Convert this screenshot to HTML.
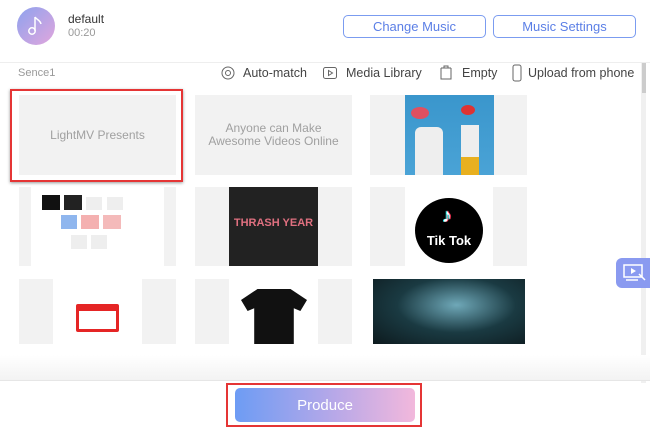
<!DOCTYPE html>
<html><head><style>
*{margin:0;padding:0;box-sizing:border-box}
body{width:650px;height:430px;overflow:hidden;background:#fff;font-family:"Liberation Sans",sans-serif;position:relative}
.a{position:absolute}
.btn{position:absolute;top:15px;height:23px;border:1px solid #7b9cf0;border-radius:5px;color:#5b7fe6;font-size:13px;text-align:center;line-height:21px}
.cell{position:absolute;background:#f2f2f2;overflow:hidden}
.t{font-size:12.5px;color:#444;position:absolute;top:66px}
.g{color:#a0a0a0;font-size:12px;text-align:center;position:absolute;width:100%}
</style></head><body>
<div class="a" style="left:17px;top:7px;width:38px;height:38px;border-radius:50%;background:linear-gradient(135deg,#8ea2ee,#e1a6dd)"></div>
<svg class="a" style="left:26px;top:14px" width="20" height="24" viewBox="0 0 20 24"><path d="M9 3v14" stroke="#fff" stroke-width="1.5" fill="none"/><path d="M9 3c2 3 5 3 6 7" stroke="#fff" stroke-width="1.5" fill="none"/><circle cx="6" cy="17" r="3.2" stroke="#fff" stroke-width="1.5" fill="none"/></svg>
<div class="a" style="left:68px;top:12px;font-size:12px;color:#333">default</div>
<div class="a" style="left:68px;top:27px;font-size:11px;color:#999">00:20</div>
<div class="btn" style="left:343px;width:143px">Change Music</div>
<div class="btn" style="left:493px;width:143px">Music Settings</div>
<div class="a" style="left:0;top:62px;width:650px;height:1px;background:#eee"></div>
<div class="a" style="left:641px;top:63px;width:5px;height:320px;background:#f0f0f0"></div>
<div class="a" style="left:642px;top:63px;width:4px;height:30px;background:#ccc"></div>
<div class="a" style="left:18px;top:67px;font-size:11px;color:#999">Sence1</div>
<svg class="a" style="left:220px;top:65px" width="16" height="16"><circle cx="8" cy="8" r="6" stroke="#666" fill="none"/><circle cx="8" cy="8" r="2.5" stroke="#666" fill="none"/></svg>
<div class="t" style="left:243px">Auto-match</div>
<svg class="a" style="left:322px;top:65px" width="16" height="16"><rect x="1.5" y="2.5" width="13" height="11" rx="2" stroke="#666" fill="none"/><path d="M6.5 5.5v5l4-2.5z" stroke="#666" fill="none"/></svg>
<div class="t" style="left:346px">Media Library</div>
<svg class="a" style="left:438px;top:64px" width="16" height="17"><path d="M3 4h10M3 4v11h10V4M6 4V2h4v2" stroke="#666" fill="none"/></svg>
<div class="t" style="left:462px">Empty</div>
<svg class="a" style="left:512px;top:64px" width="10" height="18"><rect x="1" y="1" width="8" height="16" rx="2" stroke="#666" fill="none"/></svg>
<div class="t" style="left:528px">Upload from phone</div>

<div class="cell" style="left:19px;top:95px;width:157px;height:80px"><div class="g" style="top:33px">LightMV Presents</div></div>
<div class="a" style="left:10px;top:89px;width:173px;height:93px;border:2px solid #e53535;box-shadow:0 1px 3px #999"></div>
<div class="cell" style="left:195px;top:95px;width:157px;height:80px"><div class="g" style="top:27px;line-height:13px">Anyone can Make<br>Awesome Videos Online</div></div>
<div class="cell" style="left:370px;top:95px;width:157px;height:80px"><div class="a" style="left:35px;top:0;width:89px;height:80px;background:linear-gradient(#3a96cc,#4aa3d6)"><div class="a" style="left:6px;top:12px;width:18px;height:12px;background:#e05060;border-radius:50%"></div><div class="a" style="left:10px;top:32px;width:28px;height:48px;background:#eee;border-radius:6px 6px 0 0"></div><div class="a" style="left:56px;top:30px;width:18px;height:32px;background:#eee"></div><div class="a" style="left:56px;top:10px;width:14px;height:10px;background:#d33;border-radius:50%"></div><div class="a" style="left:56px;top:62px;width:18px;height:18px;background:#e8b020"></div></div></div>

<div class="cell" style="left:19px;top:187px;width:157px;height:79px"><div class="a" style="left:12px;top:0;width:133px;height:79px;background:#fff"><div class="a" style="left:11px;top:8px;width:18px;height:15px;background:#111"></div><div class="a" style="left:33px;top:8px;width:18px;height:15px;background:#222"></div><div class="a" style="left:55px;top:10px;width:16px;height:13px;background:#eee"></div><div class="a" style="left:76px;top:10px;width:16px;height:13px;background:#eee"></div><div class="a" style="left:30px;top:28px;width:16px;height:14px;background:#8fb6ee"></div><div class="a" style="left:50px;top:28px;width:18px;height:14px;background:#f4b0b0"></div><div class="a" style="left:72px;top:28px;width:18px;height:14px;background:#f4baba"></div><div class="a" style="left:40px;top:48px;width:16px;height:14px;background:#eee"></div><div class="a" style="left:60px;top:48px;width:16px;height:14px;background:#eee"></div></div></div>
<div class="cell" style="left:195px;top:187px;width:157px;height:79px"><div class="a" style="left:34px;top:0;width:89px;height:79px;background:#222"><div class="a" style="left:0;top:30px;width:89px;text-align:center;color:#e07080;font-size:11px;font-weight:bold">THRASH YEAR</div></div></div>
<div class="cell" style="left:370px;top:187px;width:157px;height:79px"><div class="a" style="left:35px;top:0;width:88px;height:79px;background:#fff"><div class="a" style="left:10px;top:11px;width:68px;height:65px;border-radius:50%;background:#000"></div><div class="a" style="left:0;top:46px;width:88px;text-align:center;color:#fff;font-weight:bold;font-size:13px">Tik Tok</div><div class="a" style="left:37px;top:18px;color:#fff;font-size:20px;font-weight:bold;text-shadow:-1px 0 #2ee,1px 0 #f35">♪</div></div></div>

<div class="cell" style="left:19px;top:279px;width:157px;height:65px"><div class="a" style="left:34px;top:0;width:89px;height:65px;background:#fff"><div class="a" style="left:23px;top:25px;width:43px;height:28px;background:#e52525;border-radius:2px"><div class="a" style="left:3px;top:7px;width:37px;height:18px;background:#fff"></div></div></div></div>
<div class="cell" style="left:195px;top:279px;width:157px;height:65px"><div class="a" style="left:34px;top:0;width:89px;height:65px;background:#fff"><div class="a" style="left:12px;top:10px;width:66px;height:55px;background:#111;clip-path:polygon(0 20%,25% 0,75% 0,100% 20%,90% 40%,80% 35%,80% 100%,20% 100%,20% 35%,10% 40%)"></div></div></div>
<div class="a" style="left:373px;top:279px;width:152px;height:65px;background:radial-gradient(ellipse at 55% 40%,#6fa8b8,#1a3a42 50%,#0d1a1e)"></div>

<div class="a" style="left:616px;top:258px;width:34px;height:30px;border-radius:6px 0 0 6px;background:#8a9af0"></div>
<svg class="a" style="left:623px;top:264px" width="24" height="18"><rect x="1" y="1" width="18" height="12" stroke="#fff" stroke-width="1.5" fill="none"/><path d="M8 4v6l5-3z" fill="#fff"/><path d="M3 16h12M16 10l6 6" stroke="#fff" stroke-width="1.5"/></svg>

<div class="a" style="left:0;top:355px;width:650px;height:25px;background:linear-gradient(#fff,#f3f3f3)"></div>
<div class="a" style="left:0;top:380px;width:650px;height:1px;background:#e6e6e6"></div>
<div class="a" style="left:226px;top:383px;width:196px;height:44px;border:2px solid #e53535"></div>
<div class="a" style="left:235px;top:388px;width:180px;height:34px;border-radius:5px;background:linear-gradient(90deg,#6d9cf4,#b7a8e8 55%,#f2b8dc);color:#fff;font-size:15px;text-align:center;line-height:36px">Produce</div>
</body></html>
